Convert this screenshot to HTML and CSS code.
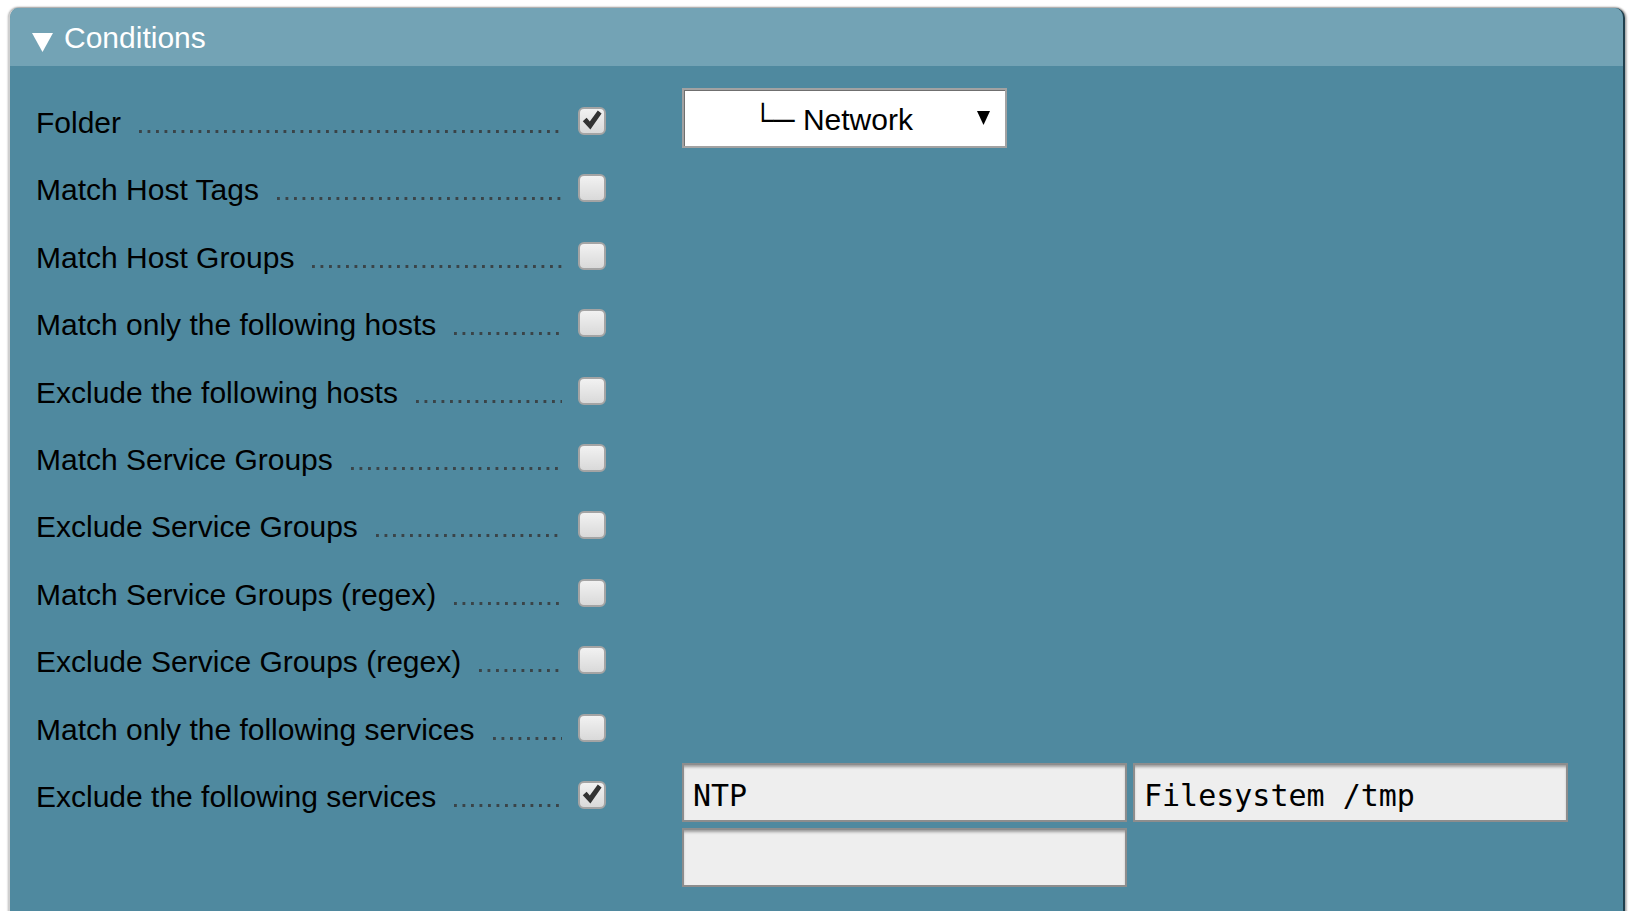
FILE: index.html
```html
<!DOCTYPE html>
<html lang="en">
<head>
<meta charset="utf-8">
<title>Conditions</title>
<link rel="stylesheet" href="styles.css">
</head>
<body>
<div class="panel">
  <div class="panel-head">
    <svg class="toggle" width="21" height="19" viewBox="0 0 21 19"><polygon points="0,0 21,0 10.5,19" fill="#fff"/></svg>
    <span class="title">Conditions</span>
  </div>
  <div class="panel-body">
    <div class="row">
      <div class="lbl"><div class="lbltext"><span>Folder</span><span class="dots"></span></div><span class="cb checked"><svg width="20" height="20" viewBox="0 0 20 20"><path d="M0.8 11.2 L4.6 7.8 L7.8 11.6 L15.8 0.6 L19.6 3.4 L8.4 19.4 Z" fill="#333"/></svg></span></div>
      <div class="val">
        <div class="select"><span class="sel-text">└─ Network</span><svg class="arrow" width="13" height="14" viewBox="0 0 13 14"><polygon points="0,0 13,0 6.5,14" fill="#000"/></svg></div>
      </div>
    </div>
    <div class="row"><div class="lbl"><div class="lbltext"><span>Match Host Tags</span><span class="dots"></span></div><span class="cb"></span></div><div class="val"></div></div>
    <div class="row"><div class="lbl"><div class="lbltext"><span>Match Host Groups</span><span class="dots"></span></div><span class="cb"></span></div><div class="val"></div></div>
    <div class="row"><div class="lbl"><div class="lbltext"><span>Match only the following hosts</span><span class="dots"></span></div><span class="cb"></span></div><div class="val"></div></div>
    <div class="row"><div class="lbl"><div class="lbltext"><span>Exclude the following hosts</span><span class="dots"></span></div><span class="cb"></span></div><div class="val"></div></div>
    <div class="row"><div class="lbl"><div class="lbltext"><span>Match Service Groups</span><span class="dots"></span></div><span class="cb"></span></div><div class="val"></div></div>
    <div class="row"><div class="lbl"><div class="lbltext"><span>Exclude Service Groups</span><span class="dots"></span></div><span class="cb"></span></div><div class="val"></div></div>
    <div class="row"><div class="lbl"><div class="lbltext"><span>Match Service Groups (regex)</span><span class="dots"></span></div><span class="cb"></span></div><div class="val"></div></div>
    <div class="row"><div class="lbl"><div class="lbltext"><span>Exclude Service Groups (regex)</span><span class="dots"></span></div><span class="cb"></span></div><div class="val"></div></div>
    <div class="row"><div class="lbl"><div class="lbltext"><span>Match only the following services</span><span class="dots"></span></div><span class="cb"></span></div><div class="val"></div></div>
    <div class="row">
      <div class="lbl"><div class="lbltext"><span>Exclude the following services</span><span class="dots"></span></div><span class="cb checked"><svg width="20" height="20" viewBox="0 0 20 20"><path d="M0.8 11.2 L4.6 7.8 L7.8 11.6 L15.8 0.6 L19.6 3.4 L8.4 19.4 Z" fill="#333"/></svg></span></div>
      <div class="val">
        <div class="inputs">
          <div class="txt w1">NTP</div>
          <div class="txt w2">Filesystem /tmp</div>
          <div class="txt w1"></div>
        </div>
      </div>
    </div>
  </div>
</div>
</body>
</html>
```
FILE: styles.css
```css
html, body {
  margin: 0;
  padding: 0;
  background: #fff;
  overflow: hidden;
  height: 911px;
}
body {
  font-family: "Liberation Sans", Arial, sans-serif;
  font-size: 30px;
  color: #000;
}
.panel {
  margin: 8px 0 0 8px;
  width: 1617px;
  height: 920px;
  border-radius: 10px 10px 0 0;
  background: #4f899f;
  border-left: 2px solid #cfcfcf;
  border-right: 2px solid #1f3f4d;
  box-shadow: 0 -1px 2px rgba(0,0,0,0.35), 2px 0 2px rgba(0,0,0,0.25);
  overflow: hidden;
  box-sizing: border-box;
}
.panel-head {
  height: 58px;
  background: #73a3b5;
  display: flex;
  align-items: center;
  padding-left: 22px;
}
.toggle {
  margin-top: 10px;
  flex: none;
}
.title {
  color: #fff;
  margin-left: 11px;
  line-height: 1;
  margin-top: 1px;
}
.panel-body {
  padding: 21.3px 0 0 26px;
}
.row {
  display: flex;
  min-height: 67.4px;
}
.lbl {
  width: 570px;
  height: 67.4px;
  box-sizing: border-box;
  padding-top: 4px;
  display: flex;
  align-items: center;
  flex: none;
}
.lbltext {
  flex: 1;
  display: flex;
  align-items: baseline;
  min-width: 0;
  white-space: nowrap;
}
.dots {
  flex: 1;
  height: 3px;
  margin-left: 18px;
  background-image: linear-gradient(to right, #3a4448 0, #3a4448 2.8px, transparent 2.8px);
  background-size: 8.5px 3px;
  background-repeat: repeat-x;
  background-position: left bottom;
}
.cb {
  flex: none;
  width: 28px;
  height: 28px;
  margin-left: 16px;
  margin-top: -4px;
  box-sizing: border-box;
  border: 2px solid #a4a4a4;
  border-radius: 6px;
  background: linear-gradient(#f2f2f2, #d9d9d9);
  display: flex;
  align-items: center;
  justify-content: center;
}
.cb svg {
  margin-top: -1px;
}
.val {
  margin-left: 76px;
  padding-top: 1px;
}
.select {
  width: 325px;
  height: 60px;
  box-sizing: border-box;
  border: 2px solid #a2a2a2;
  box-shadow: inset 1px 1px 0 #6f6f6f;
  background: #fff;
  display: flex;
  align-items: center;
  padding: 0 15px 0 4px;
}
.sel-text {
  flex: 1;
  text-align: center;
  white-space: pre;
  margin-top: 4px;
}
.arrow {
  flex: none;
  margin-top: 0px;
}
.inputs {
  display: flex;
  flex-wrap: wrap;
  gap: 6px 6px;
  width: 900px;
  padding-top: 1px;
}
.txt {
  height: 59px;
  box-sizing: border-box;
  border: 2px solid #8d8d8d;
  background: #eeeeee;
  box-shadow: inset 0 3px 3px -1px rgba(0,0,0,0.35);
  font-family: "DejaVu Sans Mono", monospace;
  font-size: 30px;
  display: flex;
  align-items: center;
  padding-left: 9px;
  padding-top: 5px;
  white-space: pre;
}
.w1 { width: 445px; }
.w2 { width: 435px; }
```
